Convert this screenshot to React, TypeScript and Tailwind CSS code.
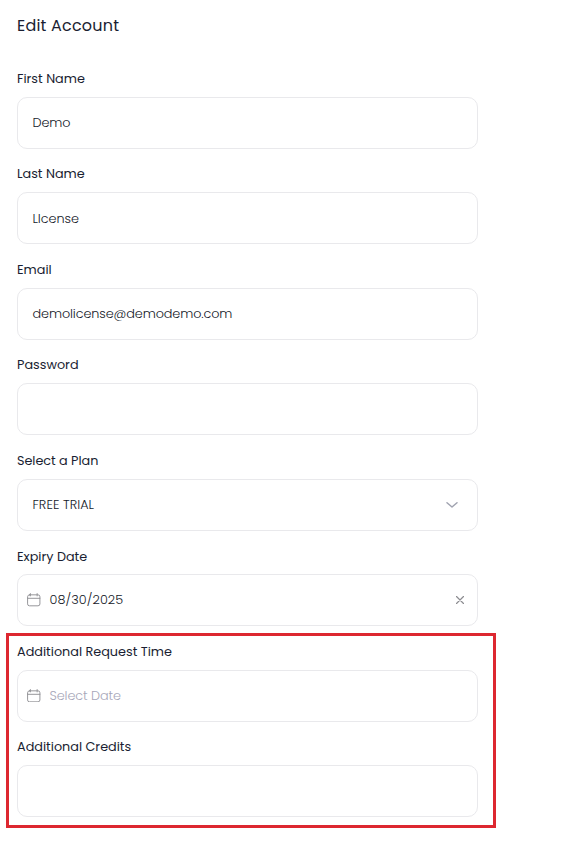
import { ReactNode } from "react";

type FieldProps = {
  label: string;
  labelClass?: string;
  children?: ReactNode;
};

function Field({ label, labelClass = "pt-[0.2px]", children }: FieldProps) {
  return (
    <div className="pb-4">
      <label
        className={`block h-[19.5px] mb-2 text-[12.8px] leading-[18.4px] text-[#1a1e32] ${labelClass}`}
      >
        {label}
      </label>
      <div className="flex items-center h-[52px] rounded-[10px] border border-[#e9e9ec] text-[12.8px] font-light text-[#141828]">
        {children}
      </div>
    </div>
  );
}

function CalendarIcon() {
  return (
    <svg
      className="ml-[9px] mr-[9px] mb-px shrink-0"
      width="13.5"
      height="13.5"
      viewBox="0 0 14 14"
      fill="none"
      stroke="#929296"
      strokeLinecap="round"
    >
      <rect x="0.6" y="1.9" width="12.8" height="11.4" rx="2" />
      <path d="M0.6 5.5h12.8M3.5 0.6v2.4M10.5 0.6v2.4" />
    </svg>
  );
}

export default function App() {
  return (
    <div className="min-h-[845px] bg-white pl-[17px] pt-3 font-['Poppins','Inter',sans-serif]">
      <h1 className="h-[57.4px] text-base leading-[27px] text-[#1a1e32] tracking-[0.2px]">
        Edit Account
      </h1>
      <form className="w-[461px]">
        <Field label="First Name">
          <span className="pl-[14.5px] tracking-[-0.1px]">Demo</span>
        </Field>
        <Field label="Last Name">
          <span className="pl-[14.5px] tracking-[-0.05px]">LIcense</span>
        </Field>
        <Field label="Email">
          <span className="pl-[14.5px] tracking-[-0.1px]">
            demolicense@demodemo.com
          </span>
        </Field>
        <Field label="Password" />
        <Field label="Select a Plan" labelClass="pt-[0.2px] tracking-[-0.04px]">
          <span className="pl-[14.5px] tracking-[0.05px]">FREE TRIAL</span>
          <svg
            className="ml-auto mr-[19px]"
            width="12"
            height="8"
            viewBox="0 0 12 8"
            fill="none"
            stroke="#a0a3b0"
            strokeWidth="1.5"
            strokeLinecap="round"
            strokeLinejoin="round"
          >
            <path d="M1 1.8 6 6l5-4.2" />
          </svg>
        </Field>
        <Field label="Expiry Date" labelClass="pt-[0.8px]">
          <CalendarIcon />
          <span className="mb-px tracking-[0.08px]">08/30/2025</span>
          <svg
            className="ml-auto mr-[13px]"
            width="8"
            height="8"
            viewBox="0 0 8 8"
            stroke="#8c8c90"
            strokeWidth="1.2"
            strokeLinecap="round"
          >
            <path d="m.5.5 7 7M7.5.5l-7 7" />
          </svg>
        </Field>
        <div className="relative">
          <Field label="Additional Request Time">
            <CalendarIcon />
            <span className="text-[#a6a6b8] tracking-[-0.08px]">
              Select Date
            </span>
          </Field>
          <Field label="Additional Credits" />
          {/* highlight around the new fields */}
          <div className="pointer-events-none absolute -left-[11px] -top-[9px] h-[195px] w-[490px] border-3 border-[#dd2730]" />
        </div>
      </form>
    </div>
  );
}
